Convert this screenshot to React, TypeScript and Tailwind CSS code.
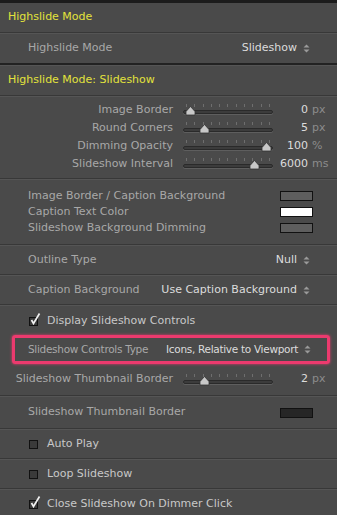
import React from 'react';

const font = { fontFamily: '"DejaVu Sans", "Lucida Grande", sans-serif' };

function Divider({ strong = false }: { strong?: boolean }) {
  return (
    <div>
      <div className={strong ? 'h-[2px] bg-[#222]' : 'h-px bg-[#383838]'} />
      <div className="h-px bg-[#555]" />
    </div>
  );
}

function Arrows() {
  return (
    <svg width="7" height="9" viewBox="0 0 7 9" className="ml-[6px] shrink-0">
      <path d="M3.5 0.5 L6.5 3.5 L0.5 3.5 Z" fill="#9a9a9a" />
      <path d="M3.5 8.5 L6.5 5.5 L0.5 5.5 Z" fill="#9a9a9a" />
    </svg>
  );
}

function Header({ title }: { title: string }) {
  return (
    <div className="flex h-[29px] items-center pl-[8px] text-[11px] text-[#e2e23c]">{title}</div>
  );
}

function SelectRow({ label, value, h = 'h-[29px]' }: { label: string; value: string; h?: string }) {
  return (
    <div className={`flex ${h} items-center whitespace-nowrap pl-[28px] pr-[27px] text-[11px]`}>
      <span className="text-[#a8a8a8]">{label}</span>
      <span className="ml-auto flex items-center text-[#dcdcdc]">
        {value}
        <Arrows />
      </span>
    </div>
  );
}

function Slider({ pos }: { pos: number }) {
  return (
    <div className="relative h-[14px] w-[90px] shrink-0">
      <div className="absolute left-[3px] right-[3px] top-[1px] flex justify-between">
        {Array.from({ length: 11 }).map((_, i) => (
          <div key={i} className="h-[3px] w-px bg-[#6e6e6e]" />
        ))}
      </div>
      <div className="absolute left-0 right-0 top-[7px] h-[4px] rounded-full border border-[#2a2a2a] bg-[#3c3c3c] shadow-[0_1px_0_#5e5e5e]" />
      <svg
        width="11"
        height="10"
        viewBox="0 0 11 10"
        className="absolute top-[3px]"
        style={{ left: pos - 5 }}
      >
        <path d="M5.5 0.5 L10 5.5 L10 9 L1 9 L1 5.5 Z" fill="#c8c8c8" stroke="#333" strokeWidth="0.8" />
      </svg>
    </div>
  );
}

function SliderRow({ label, value, unit, pos }: { label: string; value: string; unit: string; pos: number }) {
  return (
    <div className="flex h-[18px] items-center whitespace-nowrap text-[11px]">
      <span className="w-[183px] shrink-0 pr-[10px] text-right text-[#a8a8a8]">{label}</span>
      <Slider pos={pos} />
      <span className="w-[35px] text-right text-[#dcdcdc]">{value}</span>
      <span className="ml-[4px] text-[#8c8c8c]">{unit}</span>
    </div>
  );
}

function ColorRow({ label, color }: { label: string; color: string }) {
  return (
    <div className="flex h-[16px] items-center pl-[28px] pr-[24px] text-[11px]">
      <span className="text-[#a8a8a8]">{label}</span>
      <div className="ml-auto h-[10px] w-[33px] border border-[#111]" style={{ background: color }} />
    </div>
  );
}

function CheckRow({ label, checked }: { label: string; checked: boolean }) {
  return (
    <div className="flex h-[28px] items-center pl-[29px] text-[11px]">
      <div className="relative h-[9px] w-[9px] border border-[#111] bg-[#3a3a3a]">
        {checked && (
          <svg width="11" height="12" viewBox="0 0 11 12" className="absolute -top-[5px] left-[0px]">
            <path d="M1.5 7 L3.5 10.5 L9.5 0.5" fill="none" stroke="#f0f0f0" strokeWidth="1.7" />
          </svg>
        )}
      </div>
      <span className="ml-[9px] text-[#c8c8c8]">{label}</span>
    </div>
  );
}

export default function App() {
  return (
    <div className="h-[515px] w-[337px] overflow-hidden bg-[#4a4a4a]" style={font}>
      <div className="h-[3px] bg-[#1c1c1c]" />
      <Header title="Highslide Mode" />
      <Divider />
      <SelectRow label="Highslide Mode" value="Slideshow" />
      <Divider strong />
      <Header title="Highslide Mode: Slideshow" />
      <Divider />
      <div className="pb-[5px] pt-[4px]">
        <SliderRow label="Image Border" value="0" unit="px" pos={7} />
        <SliderRow label="Round Corners" value="5" unit="px" pos={21} />
        <SliderRow label="Dimming Opacity" value="100" unit="%" pos={83} />
        <SliderRow label="Slideshow Interval" value="6000" unit="ms" pos={71} />
      </div>
      <Divider />
      <div className="py-[8px]">
        <ColorRow label="Image Border / Caption Background" color="#5e5e5e" />
        <ColorRow label="Caption Text Color" color="#ffffff" />
        <ColorRow label="Slideshow Background Dimming" color="#5e5e5e" />
      </div>
      <Divider />
      <SelectRow label="Outline Type" value="Null" h="h-[28px]" />
      <Divider />
      <SelectRow label="Caption Background" value="Use Caption Background" h="h-[28px]" />
      <Divider />
      <div className="pt-[1px]">
        <CheckRow label="Display Slideshow Controls" checked />
      </div>
      <div className="ml-[12px] mr-[7px] flex h-[29px] items-center whitespace-nowrap rounded-[3px] border-[3px] border-[#ec3a6e] pl-[13px] pr-[16px] text-[10.5px] tracking-[-0.3px] shadow-[0_0_3px_#ec3a6e]">
        <span className="text-[#a8a8a8]">Slideshow Controls Type</span>
        <span className="ml-auto flex items-center text-[#dcdcdc]">
          Icons, Relative to Viewport
          <Arrows />
        </span>
      </div>
      <div className="flex h-[31px] items-center">
        <div className="w-full">
          <SliderRow label="Slideshow Thumbnail Border" value="2" unit="px" pos={21} />
        </div>
      </div>
      <Divider />
      <div className="flex h-[31px] items-center pl-[28px] pr-[24px] text-[11px]">
        <span className="text-[#a8a8a8]">Slideshow Thumbnail Border</span>
        <div className="ml-auto h-[10px] w-[33px] border border-[#111] bg-[#262626]" />
      </div>
      <Divider />
      <CheckRow label="Auto Play" checked={false} />
      <Divider />
      <CheckRow label="Loop Slideshow" checked={false} />
      <Divider />
      <CheckRow label="Close Slideshow On Dimmer Click" checked />
    </div>
  );
}
